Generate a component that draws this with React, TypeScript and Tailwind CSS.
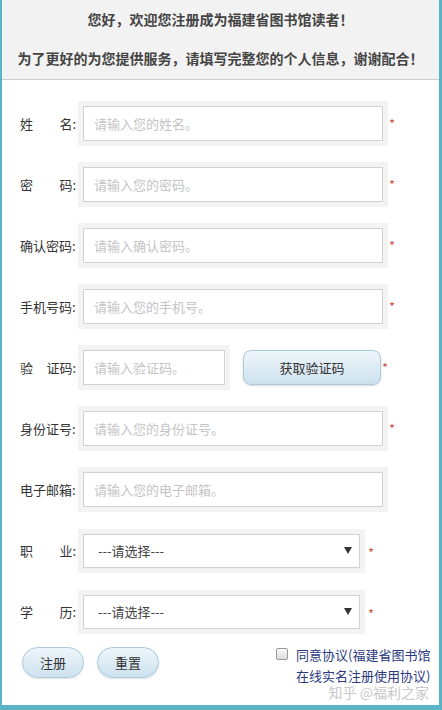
import React from 'react';

const font = { fontFamily: '"Microsoft YaHei", "Noto Sans CJK SC", "Liberation Sans", sans-serif' };

function Label({ left, right }: { left: string; right: string }) {
  return (
    <div className="w-[58px] shrink-0 flex justify-between pr-[2px] text-[13px] text-[#333] whitespace-nowrap">
      <span>{left}</span>
      <span>{right}</span>
    </div>
  );
}

function Field({ placeholder, width = 'w-[300px]' }: { placeholder: string; width?: string }) {
  return (
    <div className="p-[5px] bg-[#f3f3f3]">
      <div className={`${width} h-[35px] bg-white border border-[#d2d2d2] flex items-center pl-[10px] text-[13px] text-[#c4c4c4]`}>
        {placeholder}
      </div>
    </div>
  );
}

function Star() {
  return <span className="text-[13px] text-[#d0584a] ml-[1px] leading-none">*</span>;
}

function Select() {
  return (
    <div className="p-[5px] bg-[#f3f3f3]">
      <div className="w-[277px] h-[34px] bg-white border border-[#d2d2d2] flex items-center justify-between pl-[14px] pr-[7px] text-[13px] text-[#444]">
        <span>---请选择---</span>
        <svg width="8" height="7" viewBox="0 0 8 7">
          <path d="M0 0 L8 0 L4 7 Z" fill="#333" />
        </svg>
      </div>
    </div>
  );
}

function Row({ children }: { children: React.ReactNode }) {
  return <div className="h-[61px] flex items-center">{children}</div>;
}

export default function App() {
  return (
    <div style={font} className="relative w-[442px] h-[710px] bg-white border-l-2 border-r-[3px] border-b-[5px] border-[#5ab4c6] overflow-hidden">
      <div className="h-[80px] bg-[#f2f2f2] border-b border-[#cccccc] flex flex-col items-center pt-[9px] gap-[18px] text-[14px] font-bold text-[#444]">
        <div>您好，欢迎您注册成为福建省图书馆读者！</div>
        <div>为了更好的为您提供服务，请填写完整您的个人信息，谢谢配合！</div>
      </div>

      <div className="pl-[18px] pt-[13px]">
        <Row>
          <Label left="姓" right="名:" />
          <Field placeholder="请输入您的姓名。" />
          <Star />
        </Row>
        <Row>
          <Label left="密" right="码:" />
          <Field placeholder="请输入您的密码。" />
          <Star />
        </Row>
        <Row>
          <Label left="确认密码:" right="" />
          <Field placeholder="请输入确认密码。" />
          <Star />
        </Row>
        <Row>
          <Label left="手机号码:" right="" />
          <Field placeholder="请输入您的手机号。" />
          <Star />
        </Row>
        <Row>
          <div className="w-[58px] shrink-0 flex justify-between pr-[2px] text-[13px] text-[#333] whitespace-nowrap">
            <span>验</span>
            <span>证码:</span>
          </div>
          <Field placeholder="请输入验证码。" width="w-[142px]" />
          <button className="ml-[13px] w-[138px] h-[35px] rounded-[8px] border border-[#a9c9da] bg-gradient-to-b from-[#eef5fa] to-[#cde2ee] text-[13px] text-[#333] shadow-[0_1px_2px_rgba(0,0,0,0.15)]">
            获取验证码
          </button>
          <Star />
        </Row>
        <Row>
          <Label left="身份证号:" right="" />
          <Field placeholder="请输入您的身份证号。" />
          <Star />
        </Row>
        <Row>
          <Label left="电子邮箱:" right="" />
          <Field placeholder="请输入您的电子邮箱。" />
        </Row>
        <Row>
          <Label left="职" right="业:" />
          <Select />
          <span className="ml-[2px]">
            <Star />
          </span>
        </Row>
        <Row>
          <Label left="学" right="历:" />
          <Select />
          <span className="ml-[2px]">
            <Star />
          </span>
        </Row>

        <div className="flex items-start mt-[2px]">
          <button className="mt-[3px] ml-[2px] w-[62px] h-[31px] rounded-full border border-[#a9c9da] bg-gradient-to-b from-[#eef5fa] to-[#cde2ee] text-[13px] text-[#333] shadow-[0_1px_2px_rgba(0,0,0,0.12)]">
            注册
          </button>
          <button className="mt-[3px] ml-[13px] w-[62px] h-[31px] rounded-full border border-[#a9c9da] bg-gradient-to-b from-[#eef5fa] to-[#cde2ee] text-[13px] text-[#333] shadow-[0_1px_2px_rgba(0,0,0,0.12)]">
            重置
          </button>
          <div className="ml-[117px] w-[12px] h-[12px] mt-[4px] border border-[#9a9a9a] rounded-[2px] bg-gradient-to-b from-[#fafafa] to-[#dcdcdc]" />
          <div className="ml-[8px] text-[13px] leading-[21px] text-[#2b3a80]">
            <div>同意协议(福建省图书馆</div>
            <div>在线实名注册使用协议)</div>
          </div>
        </div>
      </div>

      <div className="absolute right-[10px] bottom-[2px] text-[14px] text-[#c8c8c8]">知乎 @福利之家</div>
    </div>
  );
}
